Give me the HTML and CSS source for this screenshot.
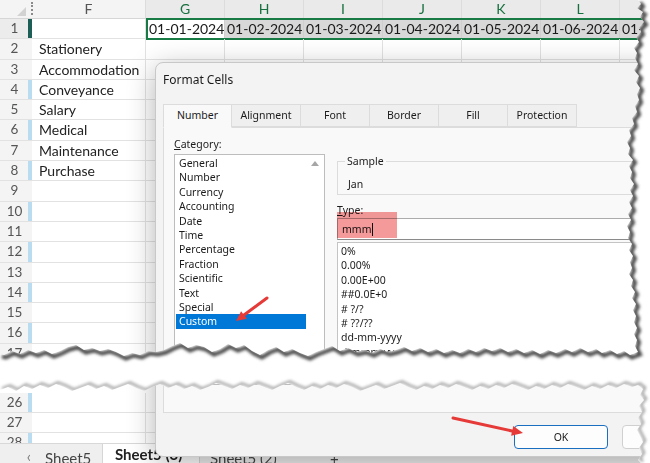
FILE: index.html
```html
<!DOCTYPE html>
<html>
<head>
<meta charset="utf-8">
<link rel="stylesheet" href="styles.css">
</head>
<body>
<div class="app">
  <div class="sheet">
    <div class="row head">
      <div class="corner"><span class="tri"></span><span class="dots"></span></div>
      <div class="ch f">F</div>
      <div class="ch sel">G</div>
      <div class="ch sel">H</div>
      <div class="ch sel">I</div>
      <div class="ch sel">J</div>
      <div class="ch sel">K</div>
      <div class="ch sel">L</div>
      <div class="ch sel"></div>
    </div>
    <div class="row">
      <div class="rh act">1</div><div class="c f"></div>
      <div class="range">
        <div class="c d first">01-01-2024</div>
        <div class="c d">01-02-2024</div>
        <div class="c d">01-03-2024</div>
        <div class="c d">01-04-2024</div>
        <div class="c d">01-05-2024</div>
        <div class="c d">01-06-2024</div>
        <div class="c d">01-07-2024</div>
      </div>
    </div>
    <div class="row"><div class="rh">2</div><div class="c f">Stationery</div><div class="c"></div><div class="c"></div><div class="c"></div><div class="c"></div><div class="c"></div><div class="c"></div><div class="c"></div></div>
    <div class="row"><div class="rh">3</div><div class="c f">Accommodation</div><div class="c"></div><div class="c"></div><div class="c"></div><div class="c"></div><div class="c"></div><div class="c"></div><div class="c"></div></div>
    <div class="row"><div class="rh mark">4</div><div class="c f">Conveyance</div><div class="c"></div><div class="c"></div><div class="c"></div><div class="c"></div><div class="c"></div><div class="c"></div><div class="c"></div></div>
    <div class="row"><div class="rh">5</div><div class="c f">Salary</div><div class="c"></div><div class="c"></div><div class="c"></div><div class="c"></div><div class="c"></div><div class="c"></div><div class="c"></div></div>
    <div class="row"><div class="rh mark">6</div><div class="c f">Medical</div><div class="c"></div><div class="c"></div><div class="c"></div><div class="c"></div><div class="c"></div><div class="c"></div><div class="c"></div></div>
    <div class="row"><div class="rh">7</div><div class="c f">Maintenance</div><div class="c"></div><div class="c"></div><div class="c"></div><div class="c"></div><div class="c"></div><div class="c"></div><div class="c"></div></div>
    <div class="row"><div class="rh mark">8</div><div class="c f">Purchase</div><div class="c"></div><div class="c"></div><div class="c"></div><div class="c"></div><div class="c"></div><div class="c"></div><div class="c"></div></div>
    <div class="row"><div class="rh">9</div><div class="c f"></div><div class="c"></div><div class="c"></div><div class="c"></div><div class="c"></div><div class="c"></div><div class="c"></div><div class="c"></div></div>
    <div class="row"><div class="rh mark">10</div><div class="c f"></div><div class="c"></div><div class="c"></div><div class="c"></div><div class="c"></div><div class="c"></div><div class="c"></div><div class="c"></div></div>
    <div class="row"><div class="rh">11</div><div class="c f"></div><div class="c"></div><div class="c"></div><div class="c"></div><div class="c"></div><div class="c"></div><div class="c"></div><div class="c"></div></div>
    <div class="row"><div class="rh mark">12</div><div class="c f"></div><div class="c"></div><div class="c"></div><div class="c"></div><div class="c"></div><div class="c"></div><div class="c"></div><div class="c"></div></div>
    <div class="row"><div class="rh">13</div><div class="c f"></div><div class="c"></div><div class="c"></div><div class="c"></div><div class="c"></div><div class="c"></div><div class="c"></div><div class="c"></div></div>
    <div class="row"><div class="rh mark">14</div><div class="c f"></div><div class="c"></div><div class="c"></div><div class="c"></div><div class="c"></div><div class="c"></div><div class="c"></div><div class="c"></div></div>
    <div class="row"><div class="rh">15</div><div class="c f"></div><div class="c"></div><div class="c"></div><div class="c"></div><div class="c"></div><div class="c"></div><div class="c"></div><div class="c"></div></div>
    <div class="row"><div class="rh mark">16</div><div class="c f"></div><div class="c"></div><div class="c"></div><div class="c"></div><div class="c"></div><div class="c"></div><div class="c"></div><div class="c"></div></div>
    <div class="row"><div class="rh">17</div><div class="c f"></div><div class="c"></div><div class="c"></div><div class="c"></div><div class="c"></div><div class="c"></div><div class="c"></div><div class="c"></div></div>
    <div class="gap"></div>
    <div class="row"><div class="rh mark">26</div><div class="c f"></div><div class="c"></div><div class="c"></div><div class="c"></div><div class="c"></div><div class="c"></div><div class="c"></div><div class="c"></div></div>
    <div class="row"><div class="rh">27</div><div class="c f"></div><div class="c"></div><div class="c"></div><div class="c"></div><div class="c"></div><div class="c"></div><div class="c"></div><div class="c"></div></div>
    <div class="row"><div class="rh mark">28</div><div class="c f"></div><div class="c"></div><div class="c"></div><div class="c"></div><div class="c"></div><div class="c"></div><div class="c"></div><div class="c"></div></div>
  </div>
  <div class="tabbar">
    <div class="nav">&lsaquo;</div>
    <div class="stab">Sheet5</div>
    <div class="stab on">Sheet5 (3)</div>
    <div class="stab third">Sheet5 (2)</div>
    <div class="stab plus">+</div>
  </div>
</div>

<div class="dialog">
  <div class="dlg-title">Format Cells</div>
  <div class="dlg-tabs">
    <div class="tab on">Number</div>
    <div class="tab">Alignment</div>
    <div class="tab">Font</div>
    <div class="tab">Border</div>
    <div class="tab">Fill</div>
    <div class="tab">Protection</div>
  </div>
  <div class="panel">
    <div class="cat-col">
      <div class="lbl"><u>C</u>ategory:</div>
      <div class="catlist">
        <div class="items">
          <div class="it">General</div>
          <div class="it">Number</div>
          <div class="it">Currency</div>
          <div class="it">Accounting</div>
          <div class="it">Date</div>
          <div class="it">Time</div>
          <div class="it">Percentage</div>
          <div class="it">Fraction</div>
          <div class="it">Scientific</div>
          <div class="it">Text</div>
          <div class="it">Special</div>
          <div class="it picked">Custom</div>
        </div>
        <div class="vscroll"><span class="up"></span></div>
      </div>
    </div>
    <div class="fmt-col">
      <fieldset class="sample">
        <legend>Sample</legend>
        <div class="sample-val">Jan</div>
      </fieldset>
      <div class="lbl type-lbl"><u>T</u>ype:</div>
      <div class="typebox">mmm<span class="caret"></span><span class="hl"></span></div>
      <div class="fmtlist">
        <div class="it">0%</div>
        <div class="it">0.00%</div>
        <div class="it">0.00E+00</div>
        <div class="it">##0.0E+0</div>
        <div class="it"># ?/?</div>
        <div class="it"># ??/??</div>
        <div class="it">dd-mm-yyyy</div>
        <div class="it">d-mmm-yy</div>
        <div class="it">d-mmm</div>
      </div>
    </div>
  </div>
  <div class="btns">
    <button class="btn ok">OK</button>
    <button class="btn">Cancel</button>
  </div>
</div>

<svg class="arrows" width="650" height="463" viewBox="0 0 650 463">
  <line x1="267" y1="298" x2="244" y2="315" stroke="#e53a37" stroke-width="3" stroke-linecap="round"/>
  <polygon points="236,321 246.9,318.8 241.1,311.2" fill="#e53a37"/>
  <line x1="453" y1="418" x2="512" y2="431" stroke="#e53a37" stroke-width="3" stroke-linecap="round"/>
  <polygon points="523,433 511.1,435.8 513.3,426" fill="#e53a37"/>
</svg>

<svg class="tear" width="650" height="463" viewBox="0 0 650 463">
  <defs>
    <filter id="soft" x="-10%" y="-10%" width="120%" height="120%"><feGaussianBlur stdDeviation="1.8"/></filter>
    <clipPath id="gapclip">
      <path d="M650,0 L638,0 641,4 637,8 643,12 640,17 644,22 639,27 641,32 636,37 639,42 634,48 637,53 635,58 638,64 634,70 639,76 636,82 640,88 637,94 639,100 635,106 637,112 632,118 634,124 629,130 631,136 627,142 630,148 628,154 633,160 629,166 632,172 630,178 634,184 630,190 633,196 629,202 632,208 628,214 631,220 627,226 630,232 628,238 632,244 629,250 633,256 630,262 632,268 629,274 633,280 631,286 635,292 632,298 636,304 633,310 636,316 634,322 637,328 634,334 637,340 635,346 638,352 630,355 624,351 617,354 610,350 602,353 596,349 588,352 580,348 572,352 565,349 556,353 548,350 540,354 532,350 524,353 516,349 508,352 500,348 492,351 484,348 476,352 468,349 460,353 452,350 444,353 436,349 428,352 420,348 412,351 404,347 396,350 388,352 380,349 372,353 364,350 356,352 348,348 340,351 332,346 324,349 316,352 308,356 300,353 292,349 284,352 276,347 268,350 260,355 252,351 244,345 236,348 228,344 220,349 212,352 204,347 196,345 188,348 180,343 172,346 164,350 156,352 148,351 140,355 132,353 124,356 116,352 108,349 100,351 92,348 84,350 76,345 68,347 60,351 52,354 44,350 36,353 28,350 20,354 12,351 4,355 0,354 L0,390 8,387 16,391 24,386 32,389 40,385 48,388 56,384 64,387 72,391 80,388 88,385 96,389 104,386 112,390 120,387 128,384 136,388 144,391 152,387 160,384 168,388 176,385 184,389 192,386 200,390 208,387 216,383 224,386 232,389 240,385 248,388 256,384 264,387 272,390 280,386 288,383 296,387 304,390 312,386 320,389 328,385 336,388 344,384 352,387 360,391 368,388 376,385 384,389 392,386 400,383 408,387 416,390 424,386 432,389 440,385 448,388 456,384 464,387 472,390 480,386 488,389 496,385 504,388 512,384 520,387 528,390 536,386 544,389 552,385 560,388 568,384 576,387 584,390 592,386 600,389 608,385 616,388 624,384 632,387 638,385 643,389 640,395 644,400 639,406 642,412 638,418 641,424 637,430 640,436 643,442 639,448 642,454 638,460 641,463 L650,463 Z"/>
    </clipPath>
  </defs>
  <rect x="0" y="0" width="650" height="463" fill="#fff" clip-path="url(#gapclip)"/>
  <g clip-path="url(#gapclip)" fill="none">
    <polyline transform="translate(2,2.5)" filter="url(#soft)" stroke="#4a4a4a" stroke-width="4" points="638,0 641,4 637,8 643,12 640,17 644,22 639,27 641,32 636,37 639,42 634,48 637,53 635,58 638,64 634,70 639,76 636,82 640,88 637,94 639,100 635,106 637,112 632,118 634,124 629,130 631,136 627,142 630,148 628,154 633,160 629,166 632,172 630,178 634,184 630,190 633,196 629,202 632,208 628,214 631,220 627,226 630,232 628,238 632,244 629,250 633,256 630,262 632,268 629,274 633,280 631,286 635,292 632,298 636,304 633,310 636,316 634,322 637,328 634,334 637,340 635,346 638,352 630,355 624,351 617,354 610,350 602,353 596,349 588,352 580,348 572,352 565,349 556,353 548,350 540,354 532,350 524,353 516,349 508,352 500,348 492,351 484,348 476,352 468,349 460,353 452,350 444,353 436,349 428,352 420,348 412,351 404,347 396,350 388,352 380,349 372,353 364,350 356,352 348,348 340,351 332,346 324,349 316,352 308,356 300,353 292,349 284,352 276,347 268,350 260,355 252,351 244,345 236,348 228,344 220,349 212,352 204,347 196,345 188,348 180,343 172,346 164,350 156,352 148,351 140,355 132,353 124,356 116,352 108,349 100,351 92,348 84,350 76,345 68,347 60,351 52,354 44,350 36,353 28,350 20,354 12,351 4,355 0,354"/>
    <polyline transform="translate(2,-1.5)" filter="url(#soft)" stroke="#9a9a9a" stroke-width="2.4" points="0,390 8,387 16,391 24,386 32,389 40,385 48,388 56,384 64,387 72,391 80,388 88,385 96,389 104,386 112,390 120,387 128,384 136,388 144,391 152,387 160,384 168,388 176,385 184,389 192,386 200,390 208,387 216,383 224,386 232,389 240,385 248,388 256,384 264,387 272,390 280,386 288,383 296,387 304,390 312,386 320,389 328,385 336,388 344,384 352,387 360,391 368,388 376,385 384,389 392,386 400,383 408,387 416,390 424,386 432,389 440,385 448,388 456,384 464,387 472,390 480,386 488,389 496,385 504,388 512,384 520,387 528,390 536,386 544,389 552,385 560,388 568,384 576,387 584,390 592,386 600,389 608,385 616,388 624,384 632,387 638,385 643,389 640,395 644,400 639,406 642,412 638,418 641,424 637,430 640,436 643,442 639,448 642,454 638,460 641,463"/>
  </g>
</svg>
</body>
</html>
```

FILE: styles.css
```css
* { box-sizing: border-box; margin: 0; padding: 0; }
html, body { width: 650px; height: 463px; overflow: hidden; background: #fff; }
body { position: relative; font-family: "Lato", "Liberation Sans", sans-serif; color: #222; }

.app { display: flex; flex-direction: column; height: 463px; }
.sheet { height: 443px; flex: none; overflow: hidden; }

.row { display: flex; height: 20.3px; border-bottom: 1px solid #e2e2e2; font-size: 14px; line-height: 19px; }
.row.head { height: 19px; background: #f4f4f4; border-bottom: 1px solid #d6d6d6; line-height: 18px; }
.gap { height: 28.7px; }

.corner { width: 32px; flex: none; display: flex; justify-content: flex-end; align-items: flex-end; padding-bottom: 2px; }
.tri { width: 0; height: 0; border-left: 9px solid transparent; border-bottom: 9px solid #d2d2d2; margin-right: 5px; }
.dots { width: 0; height: 13px; border-left: 2px dotted #8a8a8a; margin-right: -1px; align-self: center; }

.ch { width: 79px; flex: none; text-align: center; color: #555; border-right: 1px solid #dcdcdc; }
.ch.f { width: 114px; }
.ch.sel { color: #17703f; background: #eaeaea; }

.rh { width: 32px; flex: none; text-align: center; color: #555; background: #f4f4f4; border-right: 4px solid transparent; padding-left: 1px; font-size: 13.5px; }
.rh.act { border-right-color: #1d5e57; background: #ececec; }
.rh.mark { border-right-color: #b9dcf0; }

.c { width: 79px; flex: none; border-right: 1px solid #e2e2e2; white-space: nowrap; overflow: hidden; }
.c.f { width: 114px; padding-left: 7px; color: #222; }

.range { display: flex; height: 22px; margin-top: -1px; border: 2px solid #187a45; flex: none; }
.range .c { height: 18px; background: #d8d8d8; padding-left: 2px; line-height: 18px; color: #1a1a1a; border-right: 1px solid #cfcfcf; }
.range .c.first { width: 77px; background: #fff; padding-left: 1px; }

.tabbar { height: 20px; flex: none; display: flex; background: #efefef; border-top: 1px solid #d8d8d8; font-size: 15px; line-height: 18px; color: #444; overflow: hidden; }
.nav { width: 40px; text-align: right; padding-right: 9px; padding-top: 3px; color: #777; }
.stab { width: 63px; padding-left: 5px; padding-top: 5px; border-right: 1px solid #d6d6d6; }
.stab.on { width: 97px; background: #fff; font-weight: 700; color: #222; padding-left: 12px; padding-top: 1px; }
.stab.third { width: 130px; padding-left: 10px; border-right: none; }
.stab.plus { width: 40px; border: none; padding-left: 0; }

/* dialog */
.dialog { position: absolute; left: 155px; top: 62px; width: 572px; height: 395px; background: #f3f3f3; border: 1px solid #c8c8c8; border-radius: 8px; box-shadow: 0 6px 28px rgba(0,0,0,0.3); display: flex; flex-direction: column; font-family: "Noto Sans", "Liberation Sans", sans-serif; font-size: 10.5px; color: #1b1b1b; }
.dlg-title { height: 33px; line-height: 33px; padding-left: 7px; font-size: 12px; }
.dlg-tabs { display: flex; margin: 8px 7px 0; height: 23px; }
.tab { width: 69px; height: 23px; line-height: 21px; text-align: center; background: #efefef; border: 1px solid #dcdcdc; border-left: none; }
.tab.on { background: #f9f9f9; border-left: 1px solid #dcdcdc; border-bottom-color: #f9f9f9; height: 24px; position: relative; z-index: 1; }

.panel { margin: 0 7px; height: 286px; background: #f9f9f9; border: 1px solid #dcdcdc; display: flex; gap: 12px; padding: 9px 0 0 10px; overflow: hidden; }
.lbl { height: 14px; line-height: 14px; }
.cat-col { width: 151px; flex: none; }
.catlist { margin-top: 3px; height: 231px; background: #fff; border: 1px solid #bdbdbd; display: flex; padding: 1px 0 0 1px; }
.items { width: 130px; }
.it { height: 14.4px; line-height: 14.4px; padding-left: 3px; white-space: nowrap; }
.it.picked { background: #0078d7; color: #fff; }
.vscroll { flex: 1; display: flex; justify-content: center; padding-top: 5px; }
.up { width: 0; height: 0; border-left: 4px solid transparent; border-right: 4px solid transparent; border-bottom: 5px solid #a6a6a6; }

.fmt-col { flex: 1; padding-top: 17px; }
.sample { border: 1px solid #dcdcdc; padding: 0 0 0 7px; margin: 0; }
.sample legend { padding: 0 2px; line-height: 14px; height: 14px; }
.sample-val { padding: 9px 0 0 3px; line-height: 14px; height: 26px; }
.type-lbl { margin-top: 8px; }
.typebox { position: relative; margin-top: 1px; height: 22px; background: #fff; border: 1px solid #acacac; border-bottom-color: #8a8a8a; padding-left: 4px; line-height: 20px; display: flex; align-items: center; }
.caret { width: 1px; height: 13px; background: #111; margin-left: 1px; }
.hl { position: absolute; left: -1px; top: -7px; width: 60px; height: 26px; background: #f59a9a; mix-blend-mode: multiply; }
.fmtlist { margin-top: 2px; height: 140px; background: #fff; border: 1px solid #c4c4c4; padding-top: 1px; }

.btns { display: flex; justify-content: flex-end; gap: 14px; padding: 12px 10px 0 0; }
.btn { width: 94px; height: 24px; background: #fdfdfd; border: 1px solid #d0d0d0; border-radius: 4px; font-family: "Noto Sans", "Liberation Sans", sans-serif; font-size: 10.5px; color: #1b1b1b; }
.btn.ok { border: 1.5px solid #1a6fc0; }

.arrows { position: absolute; left: 0; top: 0; pointer-events: none; }
.tear { position: absolute; left: 0; top: 0; pointer-events: none; }
```
